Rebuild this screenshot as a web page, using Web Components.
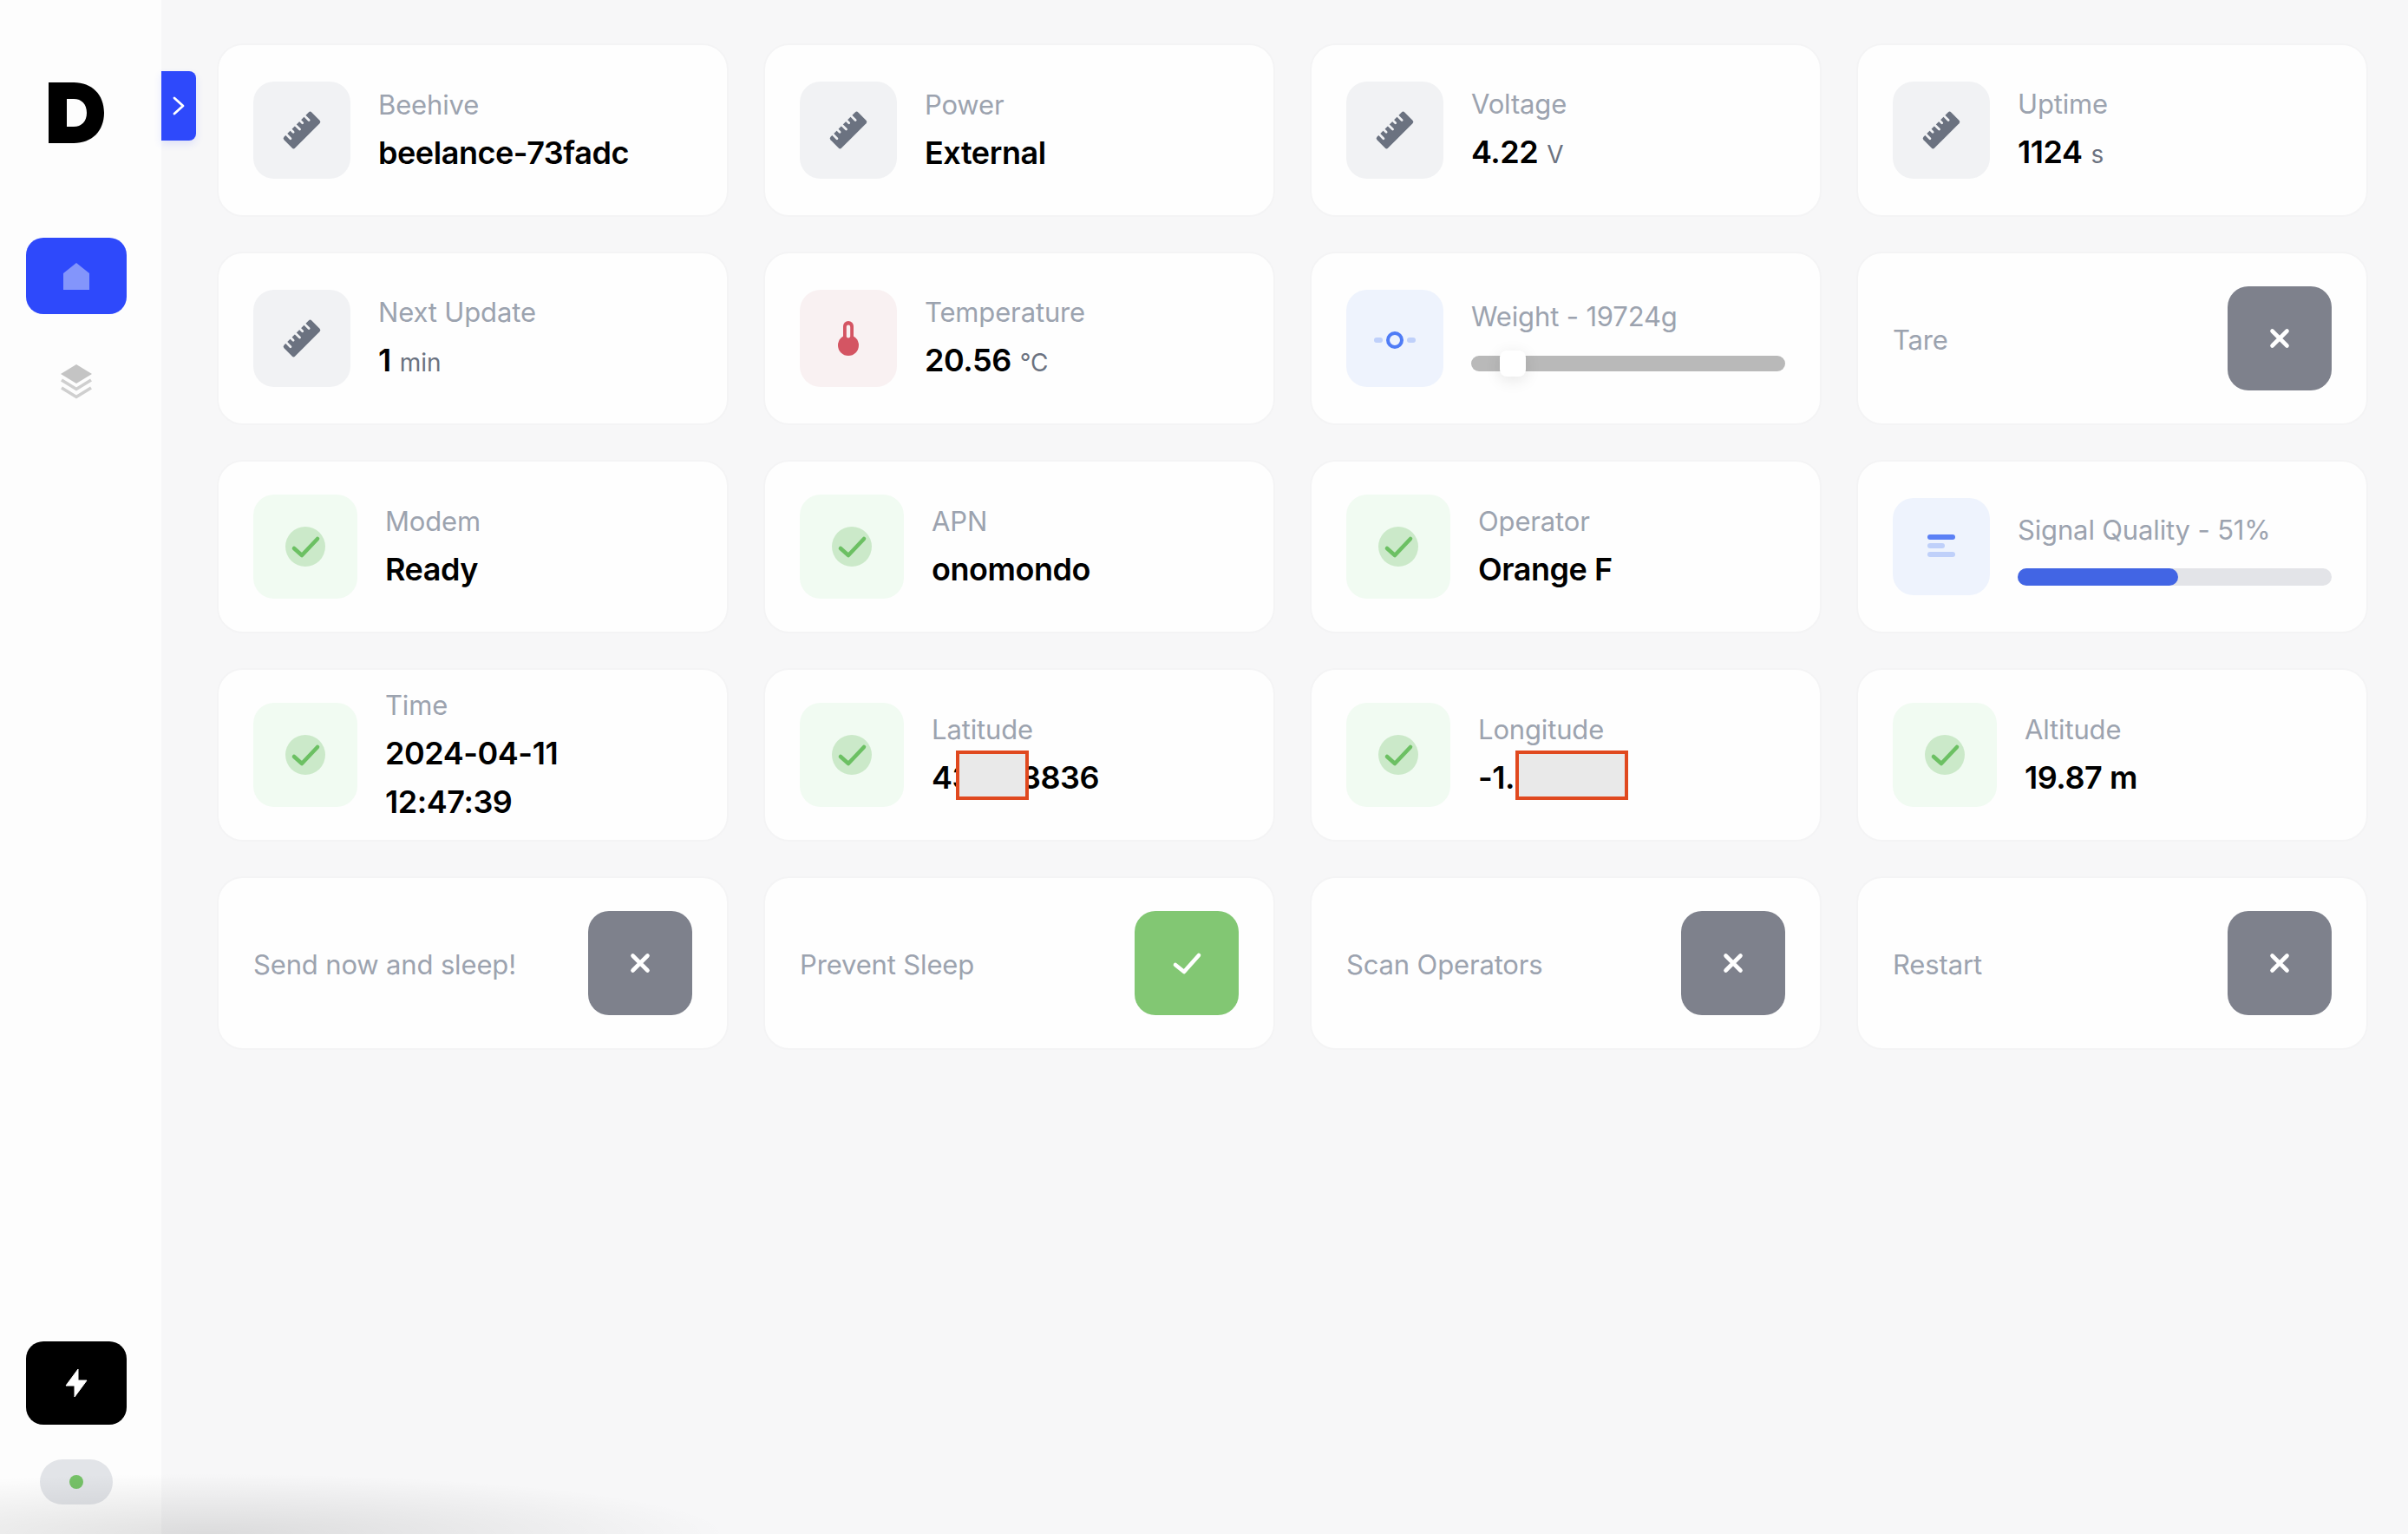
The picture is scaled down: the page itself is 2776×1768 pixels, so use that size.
<!DOCTYPE html>
<html lang="en">
<head>
<meta charset="utf-8">
<title>Beehive dashboard</title>
<style>
    html, body { margin: 0; height: 100%; background: #f7f7f8; overflow: hidden; }
    body { font-family: 'Inter', 'Liberation Sans', sans-serif; }
</style>
</head>
<body>
<app-shell>
    <app-sidebar slot="sidebar"></app-sidebar>
    <stat-grid>
        <stat-card icon="ruler" label="Beehive">beelance-73fadc</stat-card>
        <stat-card icon="ruler" label="Power">External</stat-card>
        <stat-card icon="ruler" label="Voltage">4.22<stat-unit>V</stat-unit></stat-card>
        <stat-card icon="ruler" label="Uptime">1124<stat-unit>s</stat-unit></stat-card>

        <stat-card icon="ruler" label="Next Update">1<stat-unit>min</stat-unit></stat-card>
        <stat-card icon="thermo" label="Temperature">20.56<stat-unit>°C</stat-unit></stat-card>
        <slider-card label="Weight - 19724g" kind="slider" value="9"></slider-card>
        <toggle-card label="Tare"></toggle-card>

        <stat-card icon="check" label="Modem">Ready</stat-card>
        <stat-card icon="check" label="APN">onomondo</stat-card>
        <stat-card icon="check" label="Operator">Orange F</stat-card>
        <slider-card label="Signal Quality - 51%" kind="progress" value="51"></slider-card>

        <stat-card icon="check" label="Time">2024-04-11<br>12:47:39</stat-card>
        <stat-card icon="check" label="Latitude">43<redact-box style="width:84px;margin-left:-18px;margin-right:-9px"></redact-box>3836</stat-card>
        <stat-card icon="check" label="Longitude">-1.<redact-box style="width:130px;margin-left:1px"></redact-box></stat-card>
        <stat-card icon="check" label="Altitude">19.87 m</stat-card>

        <toggle-card label="Send now and sleep!"></toggle-card>
        <toggle-card label="Prevent Sleep" on></toggle-card>
        <toggle-card label="Scan Operators"></toggle-card>
        <toggle-card label="Restart"></toggle-card>
    </stat-grid>
</app-shell>

<script>
    const ICONS = {
        ruler: `<svg width="60" height="60" viewBox="-30 -30 60 60"><g transform="rotate(-45)">
            <rect x="-22.5" y="-9" width="45" height="18" rx="2.5" fill="#6b7280"/>
            <g fill="#f1f2f4">
                <rect x="-17.5" y="-11" width="2.8" height="10" rx="1.4"/>
                <rect x="-10" y="-11" width="2.8" height="7" rx="1.4"/>
                <rect x="-2.5" y="-11" width="2.8" height="10" rx="1.4"/>
                <rect x="5" y="-11" width="2.8" height="7" rx="1.4"/>
                <rect x="12.5" y="-11" width="2.8" height="10" rx="1.4"/>
            </g></g></svg>`,
        thermo: `<svg width="60" height="60" viewBox="-30 -30 60 60">
            <rect x="-6" y="-20" width="12" height="26" rx="6" fill="#d45563"/>
            <circle cx="0" cy="8" r="12" fill="#d45563"/>
            <rect x="-2.2" y="-15.5" width="4.4" height="15" rx="2.2" fill="#f9f1f2"/></svg>`,
        check: `<svg width="60" height="60" viewBox="-30 -30 60 60">
            <circle r="23" fill="#cbe9c9"/>
            <path d="M-13 2L-4 10L14-9" fill="none" stroke="#6cc063" stroke-width="4.6" stroke-linecap="round" stroke-linejoin="round"/></svg>`,
        dial: `<svg width="60" height="60" viewBox="-30 -30 60 60">
            <rect x="-24" y="-1" width="10" height="6" rx="3" fill="#bfd0fa"/>
            <rect x="14" y="-1" width="10" height="6" rx="3" fill="#bfd0fa"/>
            <circle cy="2" r="8" fill="none" stroke="#4f7cf6" stroke-width="4"/></svg>`,
        bars: `<svg width="60" height="60" viewBox="-30 -30 60 60">
            <rect x="-16" y="-14" width="32" height="6" rx="3" fill="#5b80f5"/>
            <rect x="-16" y="-4" width="20" height="6" rx="3" fill="#bfd0fa"/>
            <rect x="-16" y="6" width="32" height="6" rx="3" fill="#bfd0fa"/></svg>`
    };

    const TONES = {
        ruler: { bg: '#f1f2f4', size: 112 },
        thermo: { bg: '#f9f1f2', size: 112 },
        check: { bg: '#f1fbf2', size: 120 },
        dial: { bg: '#eef3fd', size: 112 },
        bars: { bg: '#eef3fd', size: 112 }
    };

    class AppShell extends HTMLElement {
        constructor() {
            super();
            this.attachShadow({ mode: 'open' }).innerHTML = `
                <style>
                    :host { display: flex; height: 100vh; position: relative; overflow: hidden; }
                    main { flex: 1; padding: 50px 46px 0 64px; box-sizing: border-box; }
                    .vignette {
                        position: absolute; left: 0; right: 0; bottom: 0; height: 80px;
                        pointer-events: none;
                        background: radial-gradient(ellipse 600px 70px at 240px 100%, rgba(0,0,0,.115), rgba(0,0,0,.05) 55%, transparent);
                    }
                </style>
                <slot name="sidebar"></slot>
                <main><slot></slot></main>
                <div class="vignette"></div>`;
        }
    }

    class AppSidebar extends HTMLElement {
        constructor() {
            super();
            this.attachShadow({ mode: 'open' }).innerHTML = `
                <style>
                    :host {
                        display: flex; flex-direction: column; align-items: center;
                        width: 186px; flex: none; height: 100%; box-sizing: border-box;
                        padding: 95px 10px 34px 0; background: #fdfdfd; position: relative;
                    }
                    .logo { display: block; }
                    .item { width: 116px; border-radius: 20px; display: flex; align-items: center; justify-content: center; }
                    .home { height: 88px; background: #2e49fb; margin-top: 109px; }
                    .layers { height: 88px; margin-top: 34px; }
                    .bolt { height: 96px; background: #000; margin-top: auto; }
                    .status {
                        width: 84px; height: 52px; border-radius: 26px; background: #e2e4e8;
                        margin-top: 40px; display: flex; align-items: center; justify-content: center;
                    }
                    .status i { width: 16px; height: 16px; border-radius: 50%; background: #75c167; }
                    .toggle {
                        position: absolute; left: 186px; top: 82px; width: 40px; height: 80px;
                        background: #2e49fb; border-radius: 0 8px 8px 0;
                        box-shadow: 0 4px 10px rgba(46,73,251,.12);
                        display: flex; align-items: center; justify-content: center;
                    }
                </style>
                <svg class="logo" width="64" height="70" viewBox="0 0 64 70">
                    <path fill-rule="evenodd" fill="#000" d="M0 0H29C50 0 64 14 64 35S50 70 29 70H0ZM21 19V51H29C38 51 44 45 44 35S38 19 29 19Z"/>
                </svg>
                <div class="item home">
                    <svg width="30" height="31" viewBox="0 0 30 31"><path fill="#8395fb" d="M15 0L30 12V31H0V12Z"/></svg>
                </div>
                <div class="item layers">
                    <svg width="36" height="40" viewBox="0 0 36 40">
                        <path fill="#c4c4c4" d="M18 0L36 11L18 22L0 11Z"/>
                        <path fill="none" stroke="#cfcfcf" stroke-width="3.6" d="M1 18L18 28.5L35 18"/>
                        <path fill="none" stroke="#cfcfcf" stroke-width="3.6" d="M1 27L18 37.5L35 27"/>
                    </svg>
                </div>
                <div class="item bolt">
                    <svg width="26" height="34" viewBox="0 0 26 34"><path fill="#fff" stroke="#fff" stroke-width="1" stroke-linejoin="round" d="M15 1V14H25L11 33V20H1Z"/></svg>
                </div>
                <div class="status"><i></i></div>
                <div class="toggle">
                    <svg width="14" height="22" viewBox="0 0 14 22"><path d="M2 2L12 11L2 20" fill="none" stroke="#fff" stroke-width="2.8" stroke-linecap="round" stroke-linejoin="round"/></svg>
                </div>`;
        }
    }

    class StatGrid extends HTMLElement {
        constructor() {
            super();
            this.attachShadow({ mode: 'open' }).innerHTML = `
                <style>
                    :host { display: grid; grid-template-columns: repeat(4, 1fr); grid-auto-rows: 200px; gap: 40px; }
                </style>
                <slot></slot>`;
        }
    }

    const cardCss = `
        :host {
            display: flex; align-items: center; gap: 32px; box-sizing: border-box;
            padding: 0 40px; height: 200px; background: #fefefe;
            border: 2px solid #f4f4f5; border-radius: 30px;
        }
        .tile { flex: none; display: flex; align-items: center; justify-content: center; border-radius: 24px; }
        .label { font-size: 31px; line-height: 54px; color: #9ca3af; letter-spacing: -0.15px; }
    `;

    function tile(name) {
        const t = TONES[name];
        return `<div class="tile" style="width:${t.size}px;height:${t.size}px;background:${t.bg}">${ICONS[name]}</div>`;
    }

    class StatCard extends HTMLElement {
        connectedCallback() {
            this.attachShadow({ mode: 'open' }).innerHTML = `
                <style>
                    ${cardCss}
                    .text { padding-bottom: 2px; }
                    .value { font-size: 36px; line-height: 56px; font-weight: 600; color: #000; letter-spacing: -0.45px; white-space: nowrap; }
                </style>
                ${tile(this.getAttribute('icon'))}
                <div class="text">
                    <div class="label">${this.getAttribute('label')}</div>
                    <div class="value"><slot></slot></div>
                </div>`;
        }
    }

    class StatUnit extends HTMLElement {
        constructor() {
            super();
            this.attachShadow({ mode: 'open' }).innerHTML = `
                <style>
                    :host { display: inline; margin-left: 2px; font-size: 28px; font-weight: 400; color: #6b7280; letter-spacing: 0; }
                </style>
                <slot></slot>`;
        }
    }

    class SliderCard extends HTMLElement {
        connectedCallback() {
            const isSlider = this.getAttribute('kind') === 'slider';
            const value = this.getAttribute('value');
            const bar = isSlider
                ? `<div class="track slider"><span class="thumb" style="left:${value}%"></span></div>`
                : `<div class="track progress"><span class="fill" style="width:${value}%"></span></div>`;
            this.attachShadow({ mode: 'open' }).innerHTML = `
                <style>
                    ${cardCss}
                    .body { flex: 1; min-width: 0; padding-bottom: ${isSlider ? 14 : 2}px; }
                    .track { position: relative; border-radius: 10px; }
                    .slider { height: 18px; background: #b9b9b9; margin-top: 18px; }
                    .progress { height: 20px; background: #e3e4e8; margin-top: 17px; }
                    .thumb {
                        position: absolute; top: -6px; width: 30px; height: 30px; border-radius: 8px;
                        background: #fff; box-shadow: 0 4px 18px rgba(0,0,0,.1);
                    }
                    .fill { display: block; height: 100%; background: #4265e4; border-radius: 10px; }
                </style>
                ${tile(isSlider ? 'dial' : 'bars')}
                <div class="body">
                    <div class="label">${this.getAttribute('label')}</div>
                    ${bar}
                </div>`;
        }
    }

    class ToggleCard extends HTMLElement {
        connectedCallback() {
            const on = this.hasAttribute('on');
            const glyph = on
                ? `<path d="M-13 2L-3 10L14-9"/>`
                : `<path d="M-8.5-8.5L8.5 8.5M8.5-8.5L-8.5 8.5"/>`;
            this.attachShadow({ mode: 'open' }).innerHTML = `
                <style>
                    ${cardCss}
                    :host { justify-content: space-between; }
                    .label { padding-top: 3px; }
                    .btn {
                        width: 120px; height: 120px; border-radius: 24px; flex: none;
                        display: flex; align-items: center; justify-content: center;
                        background: ${on ? '#82c773' : '#7e818c'};
                    }
                    svg { fill: none; stroke: #fff; stroke-width: 4.6; stroke-linecap: round; stroke-linejoin: round; }
                </style>
                <div class="label">${this.getAttribute('label')}</div>
                <div class="btn"><svg width="40" height="40" viewBox="-20 -20 40 40">${glyph}</svg></div>`;
        }
    }

    class RedactBox extends HTMLElement {
        constructor() {
            super();
            this.attachShadow({ mode: 'open' }).innerHTML = `
                <style>
                    :host {
                        display: inline-block; position: relative; z-index: 1; box-sizing: border-box;
                        height: 57px; margin-block: -10px; vertical-align: -3px;
                        background: #e9e9e9; border: 4px solid #e0491f;
                    }
                </style>`;
        }
    }

    customElements.define('app-shell', AppShell);
    customElements.define('app-sidebar', AppSidebar);
    customElements.define('stat-grid', StatGrid);
    customElements.define('stat-card', StatCard);
    customElements.define('stat-unit', StatUnit);
    customElements.define('slider-card', SliderCard);
    customElements.define('toggle-card', ToggleCard);
    customElements.define('redact-box', RedactBox);
</script>
</body>
</html>
